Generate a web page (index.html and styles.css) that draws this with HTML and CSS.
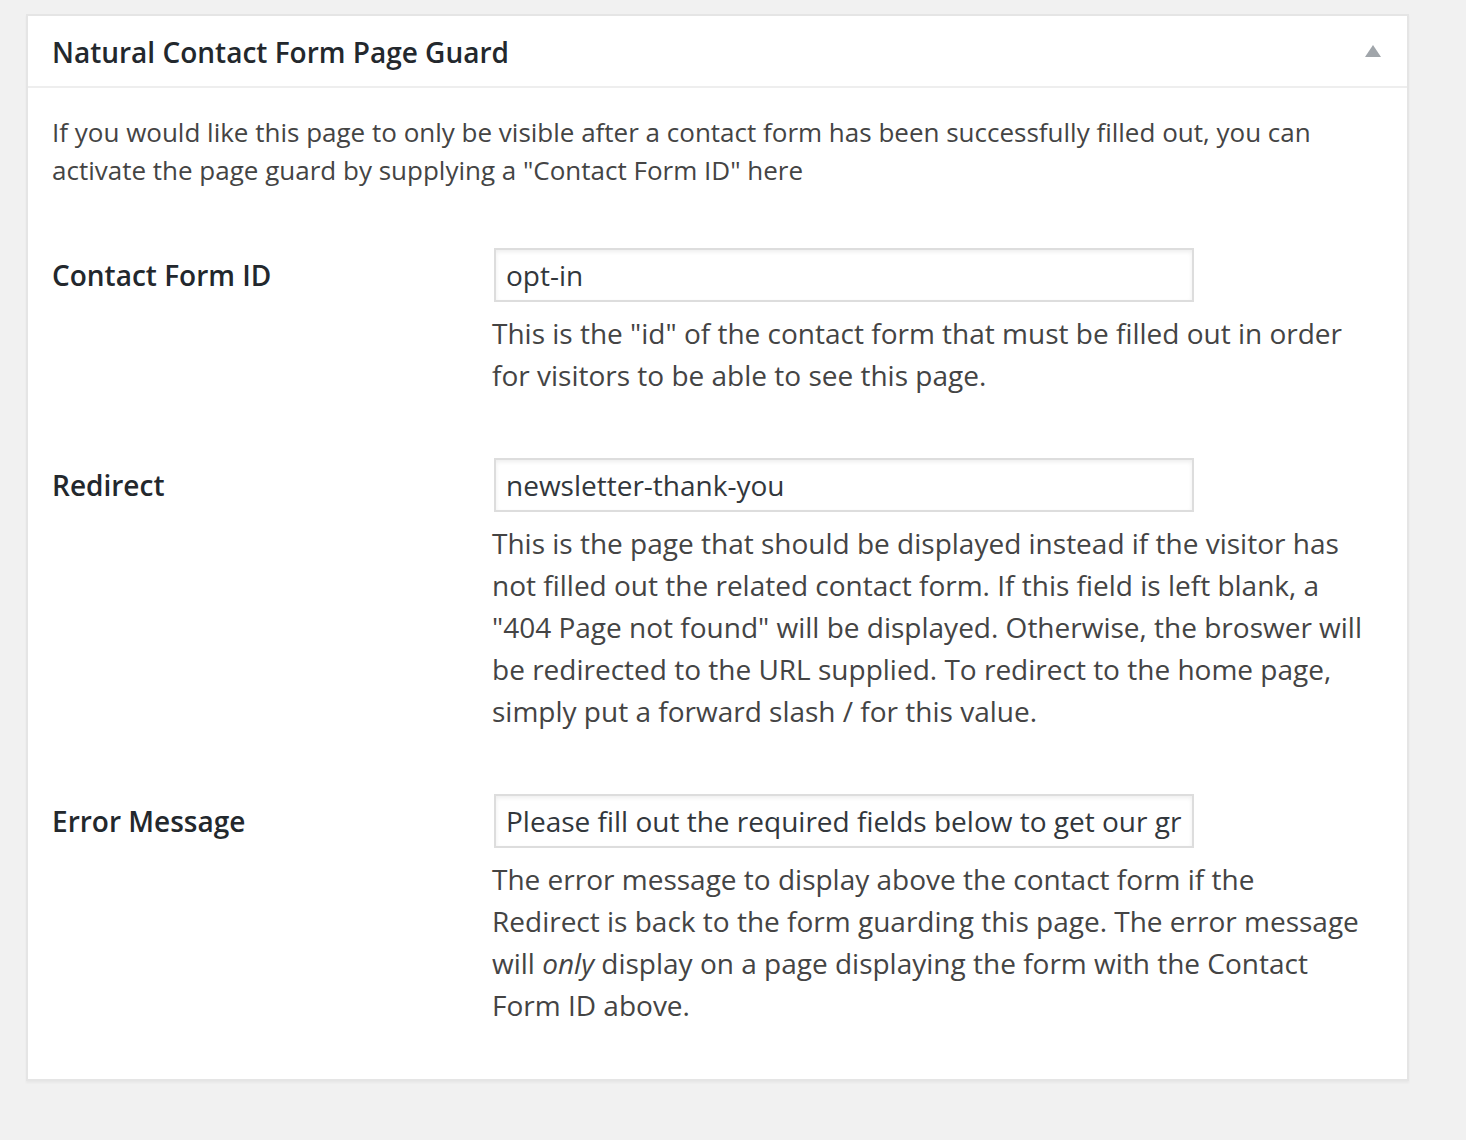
FILE: index.html
```html
<!DOCTYPE html>
<html lang="en">
<head>
<meta charset="utf-8">
<title>Natural Contact Form Page Guard</title>
<link rel="stylesheet" href="styles.css">
</head>
<body>
<div class="postbox">
  <div class="postbox-header">
    <h2 class="hndle">Natural Contact Form Page Guard</h2>
    <span class="toggle-indicator" aria-hidden="true"></span>
  </div>
  <div class="inside">
    <p class="intro">If you would like this page to only be visible after a contact form has been successfully filled out, you can activate the page guard by supplying a "Contact Form ID" here</p>
    <div class="form-table">
      <div class="form-row">
        <div class="form-label">Contact Form ID</div>
        <div class="form-field">
          <input class="text-input" type="text" value="opt-in">
          <p class="description">This is the "id" of the contact form that must be filled out in order for visitors to be able to see this page.</p>
        </div>
      </div>
      <div class="form-row">
        <div class="form-label">Redirect</div>
        <div class="form-field">
          <input class="text-input" type="text" value="newsletter-thank-you">
          <p class="description">This is the page that should be displayed instead if the visitor has not filled out the related contact form. If this field is left blank, a "404 Page not found" will be displayed. Otherwise, the broswer will be redirected to the URL supplied. To redirect to the home page, simply put a forward slash / for this value.</p>
        </div>
      </div>
      <div class="form-row">
        <div class="form-label">Error Message</div>
        <div class="form-field">
          <input class="text-input" type="text" value="Please fill out the required fields below to get our great newsletter">
          <p class="description">The error message to display above the contact form if the Redirect is back to the form guarding this page. The error message will <em>only</em> display on a page displaying the form with the Contact Form ID above.</p>
        </div>
      </div>
    </div>
  </div>
</div>
</body>
</html>
```

FILE: styles.css
```css
html, body {
  margin: 0;
  padding: 0;
}
body {
  background: #f1f1f1;
  font-family: "Open Sans", "Noto Sans", sans-serif;
  color: #444;
  min-height: 1140px;
}
.postbox {
  margin: 14px 0 0 26px;
  width: 1383px;
  box-sizing: border-box;
  background: #fff;
  border: 2px solid #e5e5e5;
  box-shadow: 0 2px 2px rgba(0, 0, 0, 0.04);
}
.postbox-header {
  display: flex;
  align-items: center;
  justify-content: space-between;
  height: 70px;
  padding: 0 26px 0 24px;
  border-bottom: 2px solid #eee;
}
.hndle {
  margin: 0;
  font-size: 28px;
  font-weight: 600;
  line-height: 36px;
  color: #23282d;
  padding-top: 2px;
}
.toggle-indicator {
  width: 0;
  height: 0;
  border-left: 8px solid transparent;
  border-right: 8px solid transparent;
  border-bottom: 12px solid #a0a5aa;
  margin-bottom: 0;
}
.inside {
  padding: 25px 24px 21px 24px;
}
.intro {
  margin: 0;
  font-size: 26px;
  line-height: 38px;
  color: #444;
}
.form-table {
  margin-top: 29px;
}
.form-row {
  display: flex;
}
.form-label {
  width: 400px;
  flex: none;
  padding: 39px 20px 40px 0;
  font-size: 28px;
  font-weight: 600;
  line-height: 36px;
  color: #23282d;
}
.form-field {
  flex: 1;
  padding: 30px 20px 32px 20px;
  min-width: 0;
}
.text-input {
  display: block;
  box-sizing: border-box;
  width: 700px;
  height: 54px;
  margin: 0 0 0 2px;
  padding: 0 10px;
  border: 2px solid #ddd;
  box-shadow: inset 0 2px 4px rgba(0, 0, 0, 0.07);
  background: #fff;
  font-family: "Open Sans", "Noto Sans", sans-serif;
  font-size: 28px;
  color: #32373c;
  outline: none;
}
.description {
  margin: 10px 0 0 0;
  font-size: 28px;
  line-height: 42px;
  color: #444;
}
.description em {
  font-style: italic;
}
```
